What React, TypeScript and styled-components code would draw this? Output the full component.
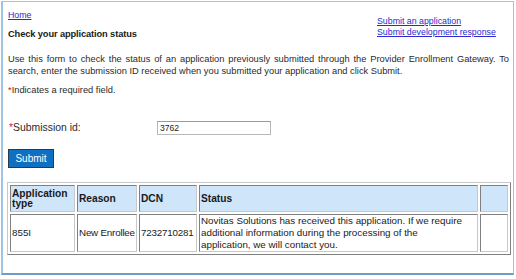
import React from "react";
import styled, { createGlobalStyle } from "styled-components";

const Global = createGlobalStyle`
  html, body { margin: 0; padding: 0; background: #fff; }
  body { font-family: "Liberation Sans", Arial, sans-serif; color: #1a1a1a; }
`;

const Frame = styled.div`
  box-sizing: border-box;
  margin: 1px 0 0 1px;
  width: 513px;
  height: 274px;
  border: 1px solid #9fc3e2;
  border-bottom: 2px solid #6f9cc2;
  border-left: 2px solid #9fc3e2;
  padding: 8px 4px 0 5px;
  display: flex;
  flex-direction: column;
`;

const TopRow = styled.div`
  display: flex;
  justify-content: space-between;
  align-items: flex-start;
`;

const LeftHead = styled.div`
  display: flex;
  flex-direction: column;
`;

const Link = styled.a`
  color: #2a2ad0;
  text-decoration: underline;
  font-size: 8.8px;
  line-height: 11px;
  white-space: nowrap;
  cursor: pointer;
`;

const RightLinks = styled.div`
  display: flex;
  flex-direction: column;
  align-items: flex-start;
  margin-top: 6px;
  width: 132px;
`;

const Title = styled.h1`
  margin: 7px 0 0 0;
  font-size: 9.3px;
  line-height: 12px;
  font-weight: bold;
  letter-spacing: -0.12px;
`;

const Para = styled.p`
  margin: 13px 0 0 0;
  font-size: 9.3px;
  line-height: 12px;
  text-align: justify;
  color: #2a2a2a;
`;

const Req = styled.span`
  color: #d11;
`;

const Note = styled.p`
  margin: 7px 0 0 0;
  font-size: 9.3px;
  line-height: 12px;
  color: #2a2a2a;
`;

const FieldRow = styled.div`
  display: flex;
  align-items: center;
  margin-top: 25px;
  padding-left: 1px;
`;

const Label = styled.label`
  width: 148px;
  font-size: 10.4px;
  line-height: 14px;
  color: #2a2a2a;
`;

const Input = styled.input`
  box-sizing: border-box;
  width: 114px;
  height: 14px;
  border: 1px solid #b8b8b8;
  border-top-color: #9a9a9a;
  padding: 0 2px;
  font-family: "Liberation Sans", Arial, sans-serif;
  font-size: 8.6px;
  color: #222;
  outline: none;
`;

const SubmitButton = styled.button`
  align-self: flex-start;
  box-sizing: border-box;
  margin-top: 14px;
  width: 46px;
  height: 19px;
  background: #0f6fc0;
  border: 1px solid #2a3a4a;
  color: #fff;
  font-family: "Liberation Sans", Arial, sans-serif;
  font-size: 10px;
  padding: 0;
`;

const Table = styled.table`
  margin-top: 14px;
  margin-left: -1px;
  width: 504px;
  table-layout: fixed;
  border: 1px solid;
  border-color: #c8c8c8 #808080 #808080 #c8c8c8;
  border-spacing: 2px;
  font-size: 9.8px;
`;

const Th = styled.th<{ $w?: number }>`
  background: #cfe5f9;
  border: 1px solid;
  border-color: #808080 #c8c8c8 #c8c8c8 #808080;
  text-align: left;
  vertical-align: middle;
  font-weight: bold;
  font-size: 10.2px;
  line-height: 10px;
  padding: 1px 1px;
  height: 27px;
  width: ${(p) => (p.$w ? `${p.$w}px` : "auto")};
  box-sizing: border-box;
  color: #1a1a1a;
`;

const Td = styled.td<{ $nowrap?: boolean }>`
  border: 1px solid;
  border-color: #808080 #c8c8c8 #c8c8c8 #808080;
  vertical-align: middle;
  line-height: 12px;
  padding: 0 0 0 1px;
  height: 38px;
  box-sizing: border-box;
  color: #1a1a1a;
  white-space: ${(p) => (p.$nowrap ? "nowrap" : "normal")};
  overflow: hidden;
  letter-spacing: ${(p) => (p.$nowrap ? "-0.2px" : "0")};
`;

export default function App() {
  return (
    <>
      <Global />
      <Frame>
        <TopRow>
          <LeftHead>
            <Link>Home</Link>
            <Title>Check your application status</Title>
          </LeftHead>
          <RightLinks>
            <Link>Submit an application</Link>
            <Link>Submit development response</Link>
          </RightLinks>
        </TopRow>
        <Para>
          Use this form to check the status of an application previously submitted through the
          Provider Enrollment Gateway. To search, enter the submission ID received when you
          submitted your application and click Submit.
        </Para>
        <Note>
          <Req>*</Req>Indicates a required field.
        </Note>
        <FieldRow>
          <Label>
            <Req>*</Req>Submission id:
          </Label>
          <Input defaultValue="3762" />
        </FieldRow>
        <SubmitButton>Submit</SubmitButton>
        <Table>
          <thead>
            <tr>
              <Th $w={65}>
                Application
                <br />
                type
              </Th>
              <Th $w={60}>Reason</Th>
              <Th $w={58}>DCN</Th>
              <Th $w={279}>Status</Th>
              <Th />
            </tr>
          </thead>
          <tbody>
            <tr>
              <Td>855I</Td>
              <Td $nowrap>New Enrollee</Td>
              <Td $nowrap>7232710281</Td>
              <Td>
                Novitas Solutions has received this application. If we require
                <br />
                additional information during the processing of the
                <br />
                application, we will contact you.
              </Td>
              <Td />
            </tr>
          </tbody>
        </Table>
      </Frame>
    </>
  );
}
